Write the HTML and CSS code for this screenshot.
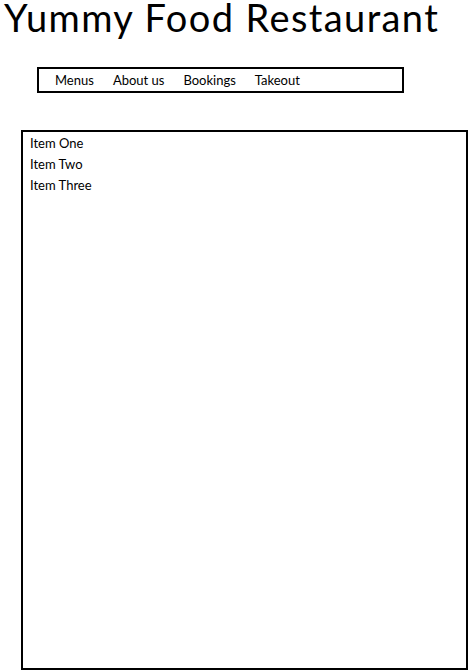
FILE: index.html
```html
<!DOCTYPE html>
<html lang="en">
<head>
    <meta charset="UTF-8">
    <meta name="viewport" content="width=device-width, initial-scale=1.0">
    <title>Yummy Food Restaurant</title>
    <link rel="stylesheet" href="styles.css">
</head>
<body>
    <h1 class="title">Yummy Food Restaurant</h1>
    <nav class="nav">
        <a href="#">Menus</a>
        <a href="#">About us</a>
        <a href="#">Bookings</a>
        <a href="#">Takeout</a>
    </nav>
    <ul class="list">
        <li>Item One</li>
        <li>Item Two</li>
        <li>Item Three</li>
    </ul>
</body>
</html>
```

FILE: styles.css
```css
body {
    font-family: "Lato", "Liberation Sans", sans-serif;
    color: #000;
    background: #fff;
    margin: 0;
    padding: 0;
}
.title {
    font-size: 38px;
    font-weight: 400;
    margin: 0;
    padding: 0 0 0 4px;
    line-height: 34px;
    height: 40px;
    letter-spacing: 1.4px;
    white-space: nowrap;
}
.nav {
    display: flex;
    gap: 19px;
    margin: 27px 0 0 37px;
    width: 367px;
    height: 26px;
    box-sizing: border-box;
    border: 2px solid #000;
    padding: 0 0 0 16px;
    align-items: center;
}
.nav a {
    color: #000;
    text-decoration: none;
    font-size: 13px;
}
.list {
    list-style: none;
    margin: 37px 0 0 21px;
    padding: 1px 0 0 7px;
    width: 447px;
    height: 540px;
    box-sizing: border-box;
    border: 2px solid #000;
}
.list li {
    font-size: 13px;
    line-height: 21px;
}
```
